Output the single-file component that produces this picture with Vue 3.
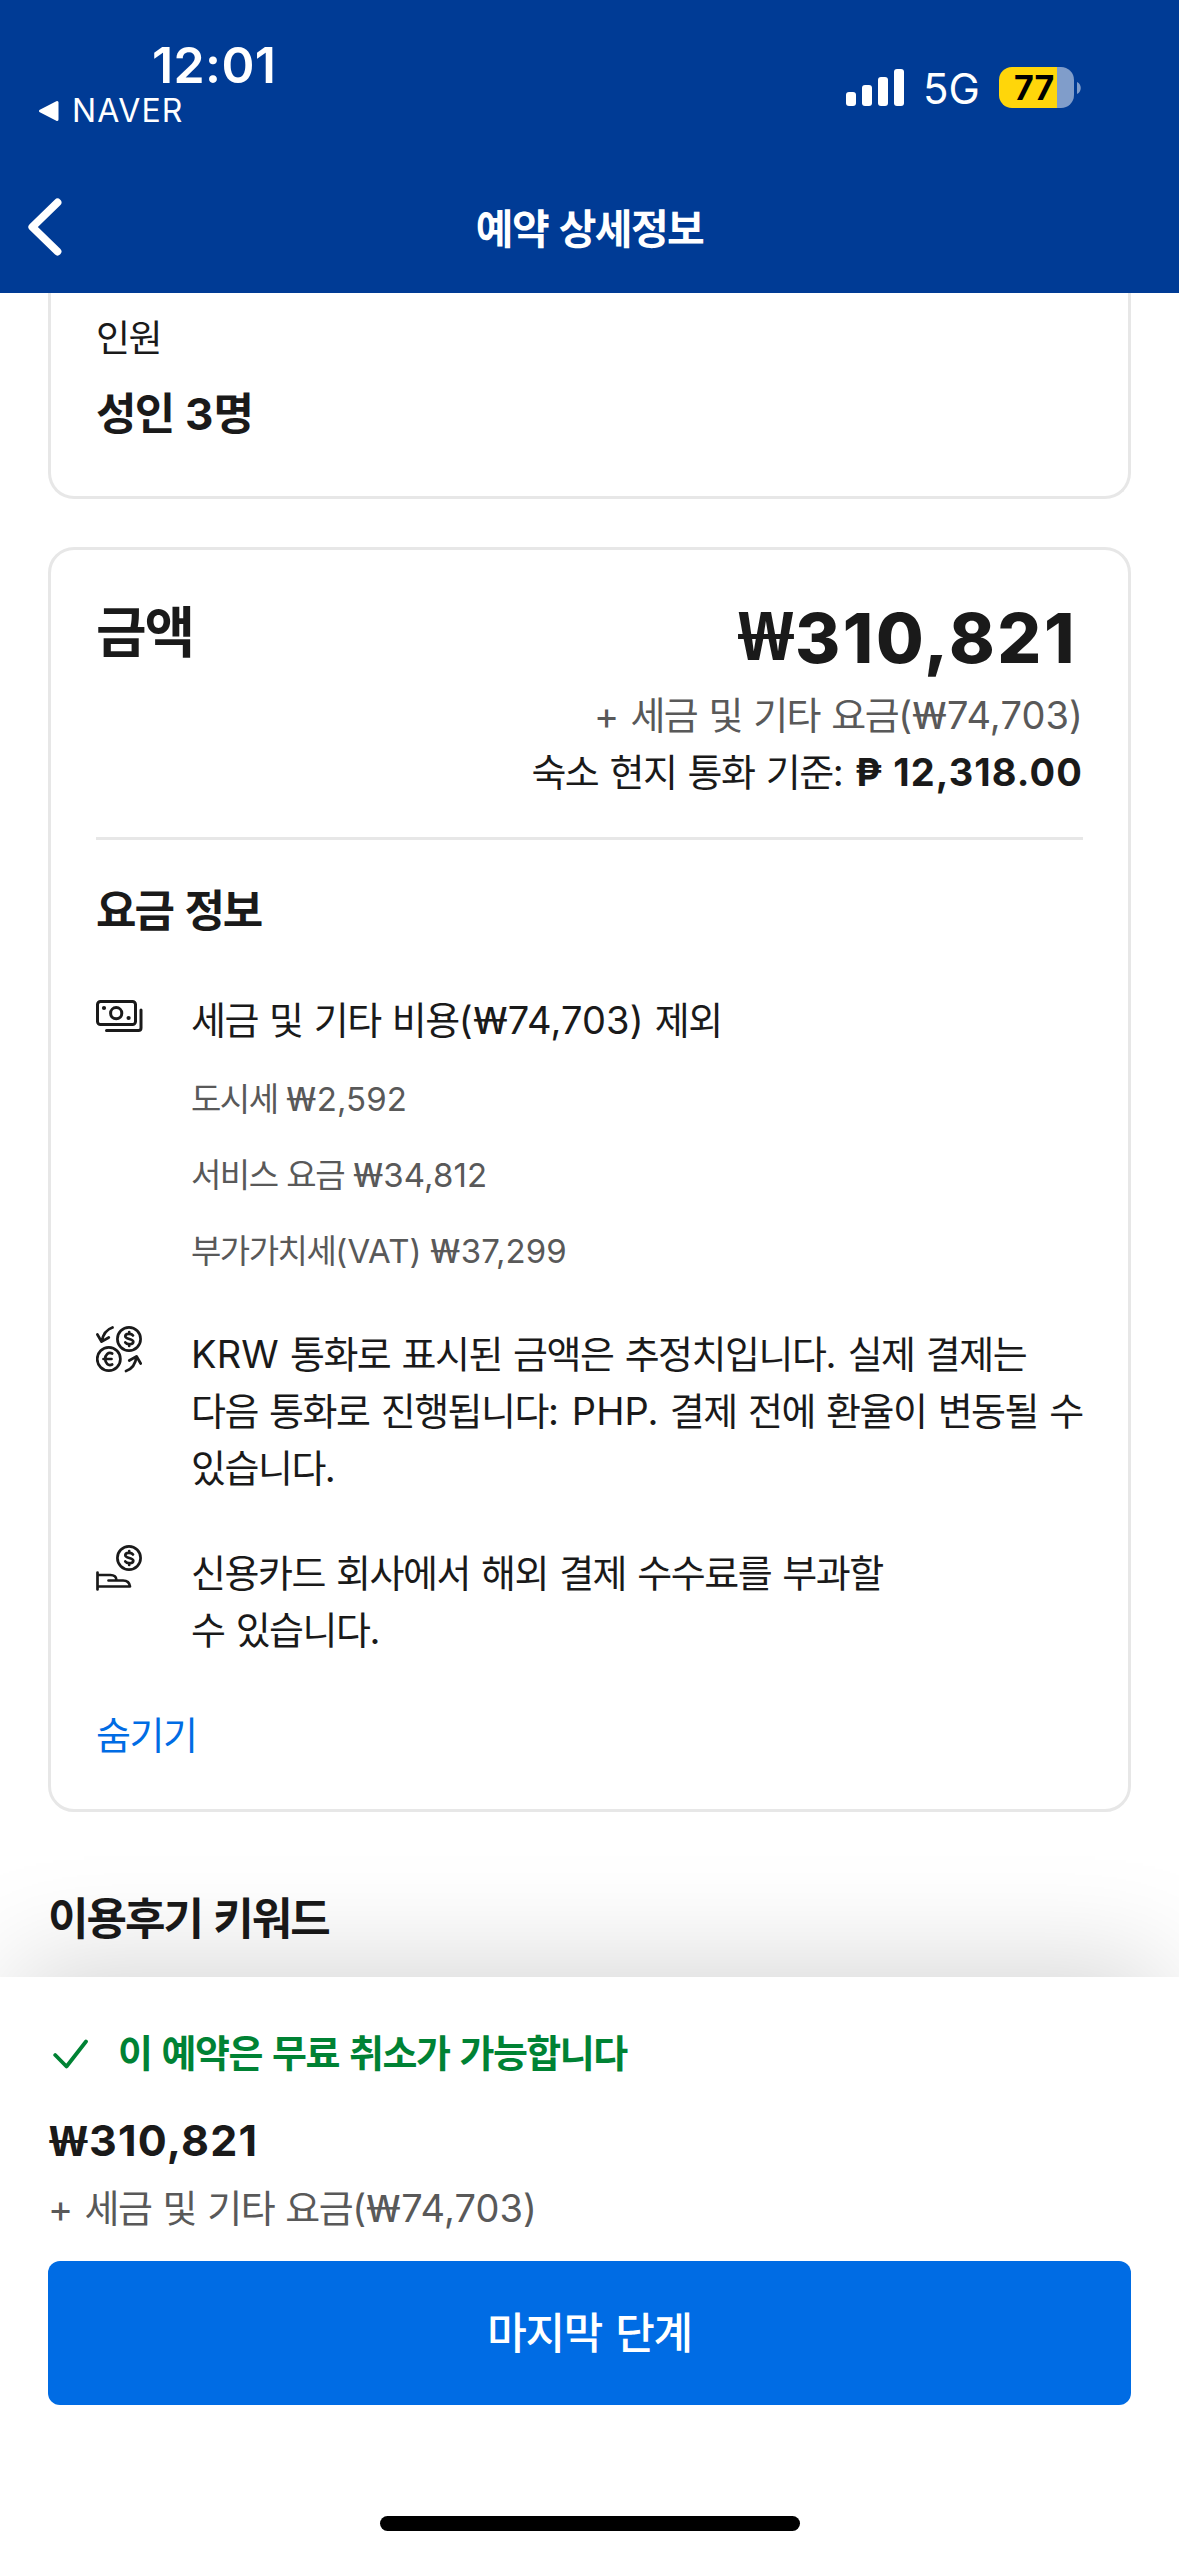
<script setup>
const fees = [
  { label: '도시세', amount: '2,592' },
  { label: '서비스 요금', amount: '34,812' },
  { label: '부가가치세', suffix: '(VAT)', amount: '37,299' },
]
</script>

<template>
  <div class="screen">
    <header class="header">
      <div class="status">
        <div class="status-left">
          <div class="time">12:01</div>
          <div class="back-app">
            <svg width="22" height="22" viewBox="0 0 22 22"><path d="M19 2.5v17L2.5 11z" fill="#fff" stroke="#fff" stroke-width="3" stroke-linejoin="round" /></svg>
            <span>NAVER</span>
          </div>
        </div>
        <div class="status-right">
          <svg class="signal" width="58" height="37" viewBox="0 0 58 37" fill="#fff">
            <rect x="0" y="23" width="10" height="14" rx="3" />
            <rect x="16" y="16" width="10" height="21" rx="3" />
            <rect x="32" y="8" width="10" height="29" rx="3" />
            <rect x="48" y="0" width="10" height="37" rx="3" />
          </svg>
          <span class="network">5G</span>
          <div class="battery"><span>77</span></div>
          <svg class="battery-cap" width="4" height="12" viewBox="0 0 4 12"><path d="M0 0C5 2 5 10 0 12z" fill="#809dca" /></svg>
        </div>
      </div>
      <nav class="nav">
        <svg class="chevron" width="34" height="58" viewBox="0 0 34 58"><path d="M29.500 4.500L4.300 29l25.200 24.500" fill="none" stroke="#fff" stroke-width="7.800" stroke-linecap="round" stroke-linejoin="round" /></svg>
        <h1>예약 상세정보</h1>
      </nav>
    </header>

    <main class="content">
      <section class="card guests">
        <div class="guests-label">인원</div>
        <div class="guests-value">성인 <span class="num">3</span>명</div>
      </section>

      <section class="card price">
        <div class="price-head">
          <h2>금액</h2>
          <div class="totals">
            <div class="total"><i>₩</i>310,821</div>
            <div class="body muted tax"><span class="num">+</span> 세금 및 기타 요금<span class="num">(<i>₩</i>74,703)</span></div>
            <div class="body">숙소 현지 통화 기준<span class="num">:</span> <b>₱ 12,318.00</b></div>
          </div>
        </div>
        <hr />
        <h3>요금 정보</h3>

        <div class="row first">
          <svg class="icon" width="48" height="48" viewBox="0 0 48 48" fill="none" stroke="#1a1a1a" stroke-width="3" stroke-linecap="round" stroke-linejoin="round">
            <rect x="1.5" y="9.5" width="38" height="23" rx="3" />
            <circle cx="20.2" cy="21.2" r="5.6" />
            <circle cx="8" cy="16" r="2.1" fill="#1a1a1a" stroke="none" />
            <circle cx="32.6" cy="26" r="2.1" fill="#1a1a1a" stroke="none" />
            <path d="M45 18v18a2.5 2.5 0 0 1-2.5 2.5H10.500" />
          </svg>
          <div class="body">세금 및 기타 비용<span class="num">(<i>₩</i>74,703)</span> 제외</div>
        </div>
        <ul class="fees">
          <li v-for="fee in fees" :key="fee.label">{{ fee.label }}<span v-if="fee.suffix" class="num">{{ fee.suffix }}</span>&nbsp;<span class="num"><i>₩</i>{{ fee.amount }}</span></li>
        </ul>

        <div class="row">
          <svg class="icon" width="48" height="48" viewBox="0 0 48 48" fill="none" stroke="#1a1a1a" stroke-width="2.7" stroke-linecap="round" stroke-linejoin="round">
            <circle cx="33" cy="13" r="11.6" />
            <path d="M37 9.500C35.500 7.300 29.300 7.200 29.300 10.300c0 3.300 8 2 8 5.500 0 3.300-6.500 3-8 .7M33.200 6v2M33.200 18v2" />
            <circle cx="12.800" cy="33" r="11.600" />
            <path d="M16.200 27.500c-4-1.800-7 1.300-7 5.500s3 7.300 7 5.500M7.500 33h8" />
            <path d="M16.500 1.500C10.500 3.500 7 8 5.700 15.500M1.400 8.500l4.200 7.200 7.200-4.200M30 45c6-2 9.500-6.500 10.500-14.500M33.300 34.500l7.200-4.200 4.200 7.200" />
          </svg>
          <div class="body"><span class="num">KRW</span> 통화로 표시된 금액은 추정치입니다<span class="num">.</span> 실제 결제는<br />다음 통화로 진행됩니다<span class="num">: PHP.</span> 결제 전에 환율이 변동될 수<br />있습니다.</div>
        </div>
        <div class="row">
          <svg class="icon" width="48" height="48" viewBox="0 0 48 48" fill="none" stroke="#1a1a1a" stroke-width="2.7" stroke-linecap="round" stroke-linejoin="round">
            <circle cx="33" cy="13" r="11.6" />
            <path d="M37 9.500C35.500 7.300 29.300 7.200 29.300 10.300c0 3.300 8 2 8 5.500 0 3.300-6.500 3-8 .7M33.200 6v2M33.200 18v2" />
            <path d="M1.500 27.500v17M1.500 30h13c3.500 0 6 2 6 5.200M12.500 35.500H27c4 0 6.500 2 7 6h-32.500" />
          </svg>
          <div class="body">신용카드 회사에서 해외 결제 수수료를 부과할<br />수 있습니다.</div>
        </div>
        <a class="body hide">숨기기</a>
      </section>

      <h3 class="keywords">이용후기 키워드</h3>
    </main>

    <footer class="footer">
      <div class="free">
        <svg width="36" height="32" viewBox="0 0 36 32"><path d="M2.200 17L13.500 28.500 33 3.500" fill="none" stroke="#008234" stroke-width="3.800" stroke-linecap="round" stroke-linejoin="round" /></svg>
        <span>이 예약은 무료 취소가 가능합니다</span>
      </div>
      <div class="footer-price"><i>₩</i>310,821</div>
      <div class="body muted"><span class="num">+</span> 세금 및 기타 요금<span class="num">(<i>₩</i>74,703)</span></div>
      <button type="button">마지막 단계</button>
      <div class="home-bar"></div>
    </footer>
  </div>
</template>

<style>
body {
  margin: 0;
}
</style>

<style scoped>
.screen {
  width: 1179px;
  height: 2556px;
  display: flex;
  flex-direction: column;
  overflow: hidden;
  background: #fff;
  color: #1a1a1a;
  font-family: Inter, "Noto Sans CJK KR", sans-serif;
  white-space: nowrap;
}

h1, h2, h3, hr, ul {
  margin: 0;
  padding: 0;
}

svg {
  display: block;
  flex: none;
}

/* Won sign: single bar, widened */
i {
  display: inline-block;
  width: 0.92em;
  font-family: "Noto Sans", sans-serif;
  font-style: normal;
  line-height: 1;
  letter-spacing: 0;
  text-align: center;
  transform: scaleX(1.33);
}

.num {
  letter-spacing: 0.1px;
}

/* Header */
.header {
  flex: none;
  height: 293px;
  background: #003b95;
  color: #fff;
}

.status {
  height: 167px;
  display: flex;
  justify-content: space-between;
}

.status-left {
  padding: 35px 0 0 38px;
}

.time {
  padding-left: 114px;
  font-size: 50px;
  font-weight: 600;
  line-height: 60px;
  letter-spacing: 0.4px;
}

.back-app {
  display: flex;
  align-items: center;
  gap: 12px;
  height: 31px;
  font-size: 32px;
  line-height: 31px;
  letter-spacing: 1.1px;
}

.status-right {
  display: flex;
  align-items: center;
  height: 41px;
  padding: 67px 98px 0 0;
}

.network {
  margin-left: 19px;
  padding-top: 3px;
  width: 76px;
  font-size: 42px;
  line-height: 42px;
}

.battery {
  width: 75px;
  height: 41px;
  border-radius: 13px;
  background: linear-gradient(90deg, #ffd60a 58px, #809dca 58px);
  color: #000;
  font-size: 34px;
  font-weight: 700;
  line-height: 42px;
}

.battery span {
  padding-left: 15px;
}

.battery-cap {
  margin-left: 3px;
}

.nav {
  height: 120px;
  display: grid;
  grid-template-columns: 100px 1fr 100px;
  align-items: center;
}

.chevron {
  margin-left: 28px;
}

.nav h1 {
  padding-top: 4px;
  text-align: center;
  font-size: 41px;
  font-weight: 600;
  line-height: 60px;
  letter-spacing: -1.6px;
  word-spacing: 2px;
}

/* Content */
.content {
  flex: none;
  height: 1684px;
  padding: 0 48px;
  overflow: hidden;
}

.card {
  box-sizing: border-box;
  border: 3px solid #e7e7e7;
  border-radius: 26px;
}

.guests {
  height: 206px;
  padding: 17px 45px 0;
  border-top: 0;
  border-radius: 0 0 26px 26px;
}

.guests-label {
  font-size: 37px;
  line-height: 57px;
  letter-spacing: -1.5px;
}

.guests-value {
  margin-top: 17px;
  font-size: 44px;
  font-weight: 700;
  line-height: 60px;
  letter-spacing: -1.8px;
  word-spacing: 3px;
}

.price {
  height: 1265px;
  margin-top: 48px;
  padding: 45px;
}

.price-head {
  display: flex;
  justify-content: space-between;
}

h2 {
  font-size: 55px;
  font-weight: 700;
  line-height: 74px;
  letter-spacing: -2px;
}

.totals {
  text-align: right;
}

.total {
  height: 87px;
  padding-right: 6px;
  font-size: 69px;
  font-weight: 800;
  line-height: 87px;
  letter-spacing: 2.6px;
}

.total i {
  width: 58px;
  font-size: 66px;
  font-weight: 700;
  transform: translateY(-3px) scaleX(1.18);
}

.footer-price i {
  width: 41px;
  font-size: 42px;
  font-weight: 700;
  transform: scaleX(1.27);
}

.body {
  font-size: 38px;
  line-height: 57px;
  letter-spacing: -1.5px;
  word-spacing: 2px;
}

.body b {
  font-weight: 700;
  letter-spacing: 1.1px;
  word-spacing: 0;
}

.muted {
  color: #595959;
}

.tax {
  margin-top: 5px;
}

hr {
  height: 3px;
  margin-top: 36px;
  border: 0;
  background: #e7e7e7;
}

h3 {
  margin-top: 41px;
  font-size: 44px;
  font-weight: 700;
  line-height: 60px;
  letter-spacing: -2px;
  word-spacing: 3px;
}

.row {
  display: flex;
  gap: 47px;
  margin-top: 48px;
}

.row.first {
  margin-top: 51px;
}

.fees {
  list-style: none;
  margin: 25px 0 50px 95px;
  display: flex;
  flex-direction: column;
  gap: 26px;
  font-size: 33px;
  line-height: 50px;
  letter-spacing: -1.5px;
  word-spacing: 1px;
  color: #595959;
}

.fees li {
  height: 50px;
}

.hide {
  display: block;
  margin-top: 48px;
  color: #006ce4;
}

.content .keywords {
  margin-top: 77px;
}

/* Sticky footer */
.footer {
  position: relative;
  flex: 1;
  padding: 48px 48px 0;
  background: #fff;
  box-shadow: 0 -28px 104px -16px rgba(0, 0, 0, 0.17);
}

.free {
  display: flex;
  align-items: center;
  gap: 29px;
  height: 57px;
  padding-left: 5px;
  color: #008234;
  font-size: 38px;
  font-weight: 600;
  line-height: 57px;
  letter-spacing: -1.5px;
  word-spacing: 2px;
}

.footer-price {
  height: 60px;
  margin-top: 28px;
  font-size: 43px;
  font-weight: 700;
  line-height: 60px;
  letter-spacing: 1.2px;
}

.footer .muted {
  height: 57px;
  margin-top: 10px;
}

button {
  display: block;
  width: 100%;
  height: 144px;
  margin-top: 24px;
  padding: 0;
  border: 0;
  border-radius: 12px;
  background: #006ce4;
  color: #fff;
  font: 500 43px/143px Inter, "Noto Sans CJK KR", sans-serif;
  letter-spacing: -1.3px;
  word-spacing: 3px;
}

.home-bar {
  width: 420px;
  height: 15px;
  margin: 111px auto 0;
  border-radius: 8px;
  background: #000;
}
</style>
